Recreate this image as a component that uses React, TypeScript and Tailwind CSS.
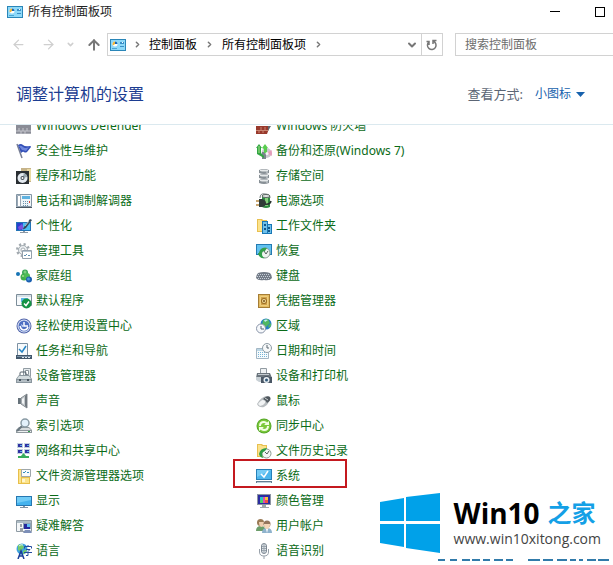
import type { ReactNode } from "react";
import { ArrowLeft, ArrowRight, ArrowUp, ChevronDown, ChevronRight } from "lucide-react";

type Item = { name: string; icon: ReactNode; marked?: boolean };

const panelIcon = (
  <>
    <path d="M0 2h16v12H0z" fill="#2a86b8" />
    <path d="M1 3h14v10H1z" fill="#8ed9f8" />
    <circle cx="5" cy="7" r="2.500" fill="#fff" />
    <path d="M5 7V4.500A2.500 2.500 0 0 1 7.500 7z" fill="#1766b5" />
    <path d="M5 7V4.500A2.500 2.500 0 0 0 3 8.500z" fill="#f0b431" />
    <path d="M10 5h4v2h-4zM10 9h4v1h-4z" fill="#3a8fc8" />
    <path d="M12 5h1v1h-1z" fill="#fff" />
    <path d="M2 11h5v1H2z" fill="#4aa6d6" />
  </>
);

const screenIcon = (
  <>
    <path d="M0 3h16v10H0z" fill="#2677b1" />
    <path d="M1 4h14v8H1z" fill="#45b3ee" />
    <path d="M1 4h14v3L1 10z" fill="#71ccf7" />
    <path d="M7 13h2v1h3v1H4v-1h3z" fill="#8294a4" />
  </>
);

const folder = (
  <>
    <path d="M1 1h5l1 1h4v12H1z" fill="#e8c050" />
    <path d="M2 2h3l1 1h4v10H2z" fill="#fbe28c" />
  </>
);

const leftItems: Item[] = [
  {
    name: "Windows Defender",
    icon: (
      <>
        <path d="M0 7h15v10H0z" fill="#8a8c96" />
        <path d="M0 13h15M0 16h15M3 10v3M7 10v3M11 10v3M5 13v3M9 13v3" stroke="#c5c6cd" fill="none" />
      </>
    ),
  },
  {
    name: "安全性与维护",
    icon: (
      <>
        <path d="M1 1l5 14" stroke="#777e94" strokeWidth="1.500" />
        <path d="M2 2q3-2 5 0t7 1q1 0 1 1l-4 5q-2 1-3 0T5 10z" fill="#3450b7" />
        <path d="M3 3q2-1 4 1t6 0l-3 4q-3-1-4-1z" fill="#6f88de" />
      </>
    ),
  },
  {
    name: "程序和功能",
    icon: (
      <>
        <path d="M5 0h10v14H5z" fill="#c6b389" />
        <path d="M11 1h4v12h-4z" fill="#e9d9a2" />
        <path d="M0 3h13v13H0z" fill="#292e32" />
        <circle cx="6.500" cy="10" r="5" fill="#e4eaf0" />
        <path d="M6.500 10L8 5q3 1 3 4z" fill="#98a6ad" />
        <circle cx="6.500" cy="10" r="2" fill="#454c55" />
        <circle cx="6.500" cy="10" r="1" fill="#fff" />
      </>
    ),
  },
  {
    name: "电话和调制解调器",
    icon: (
      <>
        <path d="M.5 1.500h15v12H.5z" fill="#eef4f8" stroke="#8496a5" />
        <path d="M6 3h8v3H6z" fill="#5fb2e0" />
        <path d="M7 8.500h6M7 10.500h6M7 12.500h6" stroke="#6b93b0" strokeDasharray="1 1" />
        <path d="M1.500 2.500h3v11h-3z" fill="#fff" stroke="#9aa8b6" />
        <path d="M13 8h1v2h-1z" fill="#db4136" />
        <path d="M0 14h16v1H0z" fill="#4b5864" />
      </>
    ),
  },
  {
    name: "个性化",
    icon: (
      <>
        <path d="M0 4h15v9H0z" fill="#2474b6" />
        <path d="M1 5h13v7H1z" fill="#49bdf1" />
        <path d="M1 5h6l-1 7H1z" fill="#293fd0" />
        <path d="M2 9l4-3 2 5-5 1z" fill="#7b50dc" />
        <path d="M7 13h2v1h3v1H4v-1h3z" fill="#8c99a5" />
        <path d="M8 9l6-8 2 1-6 8q-3 2-3 1z" fill="#34485b" />
        <path d="M9 8l4-5" stroke="#b1c4d0" />
      </>
    ),
  },
  {
    name: "管理工具",
    icon: (
      <>
        <circle cx="7" cy="7" r="5.500" fill="none" stroke="#a2a9af" strokeWidth="3" strokeDasharray="2 2.300" />
        <circle cx="7" cy="7" r="4.500" fill="#eceff1" stroke="#a7afb5" />
        <circle cx="7" cy="7" r="2" fill="#fff" stroke="#a7afb5" />
        <path d="M6.500 7.500h9v8h-9z" fill="#fff" stroke="#93a0ab" />
        <path d="M7 8h8v1H7z" fill="#b4c4d1" />
        <path d="M8 12l1 1 2-2M12 12.500h2" fill="none" stroke="#5c8fb0" />
      </>
    ),
  },
  {
    name: "家庭组",
    icon: (
      <>
        <circle cx="2" cy="6" r="2" fill="#1674b5" />
        <circle cx="9" cy="4.500" r="3" fill="#3aa85a" />
        <circle cx="8" cy="9" r="3.500" fill="#3fae4c" />
        <circle cx="11" cy="8" r="3" fill="#4dbb55" />
        <circle cx="13" cy="11.500" r="3" fill="#1a5fb0" />
        <circle cx="12.500" cy="11" r="1.500" fill="#4a97d8" />
        <circle cx="9" cy="4" r="1.500" fill="#7fd080" />
        <circle cx="7" cy="8" r="1" fill="#a5e28f" />
      </>
    ),
  },
  {
    name: "默认程序",
    icon: (
      <>
        <path d="M.5 1.500h15v11H.5z" fill="#f7fafc" stroke="#7c8d99" />
        <path d="M1 2h14v2H1z" fill="#d7e1e8" />
        <path d="M5 5h7v4H5z" fill="#5bb6e8" />
        <circle cx="10.500" cy="10.500" r="5" fill="#149344" />
        <path d="M8 10.500l2 2 3-4" fill="none" stroke="#fff" strokeWidth="1.500" />
      </>
    ),
  },
  {
    name: "轻松使用设置中心",
    icon: (
      <>
        <circle cx="8" cy="8" r="7.500" fill="#5266ab" />
        <circle cx="8" cy="8" r="6.500" fill="#e0e7f7" />
        <circle cx="8" cy="8" r="5.500" fill="#4f6fc2" />
        <path d="M8 4v4h4M4 8q1 4 4 4t4-3" fill="none" stroke="#fff" strokeWidth="1.500" />
        <path d="M5 6l3 2-2 1z" fill="#cbdcf9" />
      </>
    ),
  },
  {
    name: "任务栏和导航",
    icon: (
      <>
        <path d="M1.500.5h10v12h-10z" fill="#f7fafc" stroke="#7c91a3" />
        <path d="M3 6l3 3 4-6" fill="none" stroke="#2585c5" strokeWidth="1.500" />
        <path d="M0 12h16v4H0z" fill="#42576b" />
        <path d="M1 13h14v1H1z" fill="#7b94aa" />
        <path d="M6 14h2v1H6zM9 14h2v1H9zM12 14h2v1h-2z" fill="#dfe8ee" />
      </>
    ),
  },
  {
    name: "设备管理器",
    icon: (
      <>
        <path d="M7.500.5h7v8h-7z" fill="#e5ebee" stroke="#929ca3" />
        <path d="M9.500 2.500h3v4h-3z" fill="#fff" stroke="#8b959b" />
        <path d="M4 7V5q0-1 1-1h4q1 0 1 1v2" fill="none" stroke="#56636d" />
        <path d="M3 7h10l3 4v4H0v-4z" fill="#8a969e" />
        <path d="M3 8h10l2 3H1z" fill="#d4dcdf" />
        <path d="M1 12h14v2H1z" fill="#b4bec4" />
        <path d="M3 11h2v2H3zM11 11h2v2h-2z" fill="#4a5760" />
      </>
    ),
  },
  {
    name: "声音",
    icon: (
      <>
        <path d="M2 5h3v6H2z" fill="#66727a" />
        <path d="M5 5l6-4v14l-6-4z" fill="#c3c9cc" stroke="#858c91" />
        <path d="M9 3l2-2v14l-2-2z" fill="#71787e" />
        <path d="M6 6l2-1v6l-2-1z" fill="#f4f6f7" />
      </>
    ),
  },
  {
    name: "索引选项",
    icon: (
      <>
        <path d="M3 9h10l3 3v3H0v-3z" fill="#8f989d" />
        <path d="M3 10h10l2 2H1z" fill="#d7dcde" />
        <path d="M1 13h14v1H1z" fill="#edf0f1" />
        <path d="M12 13h2v1h-2z" fill="#2f9c48" />
        <path d="M6 8l-5 5" stroke="#697780" strokeWidth="2" />
        <circle cx="9" cy="5" r="4" fill="#dceefa" fillOpacity=".8" stroke="#899aa4" strokeWidth="1.500" />
      </>
    ),
  },
  {
    name: "网络和共享中心",
    icon: (
      <>
        <path d="M1 0h6v5H1zM8 0h6v5H8zM1 6h6v5H1zM8 6h6v5H8z" fill="#c3d3e0" />
        <path d="M2 1h4v3H2zM9 1h4v3H9zM2 7h4v3H2zM9 7h4v3H9z" fill="#2e31a3" />
        <path d="M4 2h2v1H4zM11 2h2v1h-2zM4 8h2v1H4zM11 8h2v1h-2z" fill="#5aaee5" />
        <path d="M2 13h3l2.500-3 2.500 3h3v2H2z" fill="#38ad5d" />
      </>
    ),
  },
  {
    name: "文件资源管理器选项",
    icon: (
      <>
        <path d="M2 1h5l1 1h6v14H2z" fill="#e7bf4b" />
        <path d="M3 2h2v13H3zM6 10h7v5H6z" fill="#fce38b" />
        <path d="M5.500 1.500h9v7h-9z" fill="#f9fbfc" stroke="#9ea6aa" />
        <path d="M7 4l1 1 2-2M11 4.500h2" fill="none" stroke="#368dbc" />
        <path d="M6 11h3v3H6z" fill="#fff6cd" />
      </>
    ),
  },
  { name: "显示", icon: screenIcon },
  {
    name: "疑难解答",
    icon: (
      <>
        <path d="M.5 2.500h15v11H.5z" fill="#f4f7f9" stroke="#8e9aa3" />
        <path d="M1 3h14v2H1z" fill="#adbbc4" />
        <path d="M7 5h8v6H7z" fill="#8ca3b6" />
        <path d="M8 6h6v5H8z" fill="#25279c" />
        <path d="M11 6h3v3h-3z" fill="#5ebbf0" />
        <path d="M4 6h2v3H4zM4 10h3v4H4z" fill="#9aa1a8" />
        <path d="M9 12h5l2 3H7z" fill="#7d8fb8" />
      </>
    ),
  },
  {
    name: "语言",
    icon: (
      <>
        <circle cx="6" cy="6" r="5.500" fill="#3ea2de" />
        <path d="M2 2l4-1 2 3-3 4-3-1zM7 8l4-2-1 4-3 1z" fill="#75c96b" />
        <path d="M3 3q2-2 4-1" fill="none" stroke="#d5f1fb" />
        <path d="M2 16l3-8 3 8M3 13h4" fill="none" stroke="#1b3f99" strokeWidth="1.500" />
        <path d="M8.500 5.500v-2h7v2M12 2v2M10 6.500h4l-2 2v4h-2M8 9.500h8" fill="none" stroke="#234ba1" />
      </>
    ),
  },
];

const rightItems: Item[] = [
  {
    name: "Windows 防火墙",
    icon: (
      <>
        <path d="M0 8h14l-3 8H0z" fill="#98392c" />
        <path d="M0 12.500h12M5 9v3M9 9v3M3 13v2M7 13v2" stroke="#c98572" fill="none" />
        <path d="M12 8h3l-3 5z" fill="#606971" />
      </>
    ),
  },
  {
    name: "备份和还原(Windows 7)",
    icon: (
      <>
        <circle cx="10.500" cy="10" r="5" fill="#c9c6ce" />
        <path d="M10.500 10l5-3q1 4 0 6z" fill="#e49ebb" />
        <path d="M6 9h4v7H6z" fill="#7a868d" />
        <path d="M0 5l3-4 3 4H5v5l3 3v2L1 11V5z" fill="#32a543" />
        <path d="M6 5l3-4 3 4h-1v5H8V6z" fill="#5acd50" />
        <path d="M3 3v7" stroke="#a5e588" />
        <circle cx="11" cy="10.500" r="1.500" fill="#f3f5f7" />
      </>
    ),
  },
  {
    name: "存储空间",
    icon: (
      <>
        <path d="M3 2q5-2 10 0v3q-5 2-10 0zM3 7q5-2 10 0v3q-5 2-10 0zM3 12q5-2 10 0v3q-5 2-10 0z" fill="#889096" />
        <path d="M4 2q4-1 8 0v1q-4 1-8 0zM4 7q4-1 8 0v1q-4 1-8 0zM4 12q4-1 8 0v1q-4 1-8 0z" fill="#e6e9ea" />
        <path d="M10 4h2M10 9h2M10 14h2" stroke="#d5dadd" />
      </>
    ),
  },
  {
    name: "电源选项",
    icon: (
      <>
        <path d="M6 4h8v10q-4 2-8 0z" fill="#2f8a42" />
        <path d="M9 4h3v9H9z" fill="#86cf7c" />
        <path d="M4 5q0-5 5-4 5 0 5 4" fill="none" stroke="#6e7879" />
        <ellipse cx="10" cy="3" rx="4" ry="1.500" fill="#e4e9e7" stroke="#5b6662" />
        <path d="M0 8h4M0 12h4" stroke="#b68b46" strokeWidth="1.500" />
        <path d="M3 6h3q4 1 4 4t-4 4H3z" fill="#303c38" />
        <path d="M9 11q5 1 6-3" fill="none" stroke="#293430" strokeWidth="1.500" />
      </>
    ),
  },
  {
    name: "工作文件夹",
    icon: (
      <>
        {folder}
        <path d="M6 3h6v3h4v10H6z" fill="#1878b6" />
        <path d="M7 4h4v11H7zM12 7h3v8h-3z" fill="#6fc0ea" />
        <path d="M8 6h2v2H8zM8 10h2v2H8zM12 9h2v2h-2zM12 12h2v2h-2z" fill="#105588" />
      </>
    ),
  },
  {
    name: "恢复",
    icon: (
      <>
        <path d="M0 1h16v11H0z" fill="#247bb2" />
        <path d="M1 2h14v9H1z" fill="#61c1f0" />
        <circle cx="9" cy="10" r="5" fill="#eef3ef" stroke="#8b9c95" />
        <path d="M3 10q1-6 8-5L9 8q-3 0-3 3 0 3 3 4-6 1-7-5z" fill="#33a04b" />
        <path d="M8 8l2 3 2-3" fill="none" stroke="#54635d" />
      </>
    ),
  },
  {
    name: "键盘",
    icon: (
      <>
        <path d="M2 5q6-2 12 0 2 2 2 5-2 3-8 2-6 1-8-2 0-3 2-5z" fill="#737b87" />
        <path d="M2 6.500h12M1 8.500h14M2 10.500h12" stroke="#c6ced8" strokeDasharray="1 1" />
      </>
    ),
  },
  {
    name: "凭据管理器",
    icon: (
      <>
        <path d="M2 1h12v14H2z" fill="#a57d35" />
        <path d="M3 2h10v12H3z" fill="#e3bb62" />
        <path d="M4.500 3.500h7v9h-7z" fill="#d0a34c" stroke="#efcf7e" />
        <circle cx="8" cy="8" r="3" fill="#9a6b25" />
        <circle cx="8" cy="8" r="2" fill="#f3dd9b" />
        <circle cx="8" cy="8" r="1" fill="#75501d" />
      </>
    ),
  },
  {
    name: "区域",
    icon: (
      <>
        <circle cx="10" cy="6" r="5.500" fill="#257fc6" />
        <path d="M7 2l5-1 2 4-4 4-4-1zM12 8l3-3v3l-2 2z" fill="#51b862" />
        <path d="M8 2q2-1 4 0l-3 2z" fill="#c1ecf6" />
        <circle cx="5" cy="10.500" r="4.500" fill="#f6f8fb" stroke="#8994a8" />
        <path d="M5 8v3h3" fill="none" stroke="#536276" />
      </>
    ),
  },
  {
    name: "日期和时间",
    icon: (
      <>
        <path d="M.5 5.500h12v10H.5z" fill="#f7fbfd" stroke="#a3b6c4" />
        <path d="M1 6h11v2H1z" fill="#bcd7e5" />
        <path d="M2 9.500h9M2 11.500h9M2 13.500h9" stroke="#77b4d6" strokeDasharray="1 1" />
        <circle cx="11" cy="5" r="4.500" fill="#f6f8f9" stroke="#8f9ca5" />
        <path d="M11 2v3h2" fill="none" stroke="#5a6770" />
      </>
    ),
  },
  {
    name: "设备和打印机",
    icon: (
      <>
        <path d="M4.500.5h6v5h-6z" fill="#eef1f3" stroke="#929ba2" />
        <path d="M1 5h13l2 5H0z" fill="#6a747c" />
        <path d="M2 6h11v1H2z" fill="#c2c9cf" />
        <path d="M0 9h7v5H3l-3-2z" fill="#c8d0d5" />
        <path d="M5 9h3l1-1h3l1 1h3v6H5z" fill="#4a5765" />
        <circle cx="10.500" cy="12" r="3" fill="#e6edf2" />
        <circle cx="10.500" cy="12" r="1.500" fill="#315878" />
      </>
    ),
  },
  {
    name: "鼠标",
    icon: (
      <>
        <path d="M1 11q4-7 9-8 5 0 4 3-1 5-6 8-5 1-7-3z" fill="#b8bdc0" />
        <path d="M7 6q4-4 7-2 2 3-3 6-1-3-4-4z" fill="#50585e" />
        <path d="M2 11q3-4 5-4 3 1 2 3-2 3-5 3z" fill="#f1f3f4" />
        <path d="M9 5l3 2" stroke="#cad0d3" />
      </>
    ),
  },
  {
    name: "同步中心",
    icon: (
      <>
        <circle cx="8" cy="8" r="7.500" fill="#57a82a" />
        <circle cx="8" cy="8" r="6.500" fill="#7cc93b" />
        <path d="M4 8q0-4 4-4 2 0 3 2M12 8q0 4-4 4-2 0-3-2" fill="none" stroke="#f3ffe5" strokeWidth="2" />
        <path d="M8 7h5V3zM8 9H3v4z" fill="#f3ffe5" />
      </>
    ),
  },
  {
    name: "文件历史记录",
    icon: (
      <>
        {folder}
        <circle cx="10.500" cy="10.500" r="4.500" fill="#f3f6f4" stroke="#8c9d95" />
        <path d="M3 11q1-6 8-6L9 8q-3 1-3 3 0 3 2 4-4 0-5-4z" fill="#2e9d46" />
        <path d="M9 9l2 2 2-3" fill="none" stroke="#54635d" />
      </>
    ),
  },
  {
    name: "系统",
    marked: true,
    icon: (
      <>
        <path d="M0 1h16v11H0z" fill="#2681b9" />
        <path d="M1 2h14v9H1z" fill="#4cb5ec" />
        <path d="M1 2h14L1 9z" fill="#75cbf5" />
        <path d="M5 6l3 3 4-6" fill="none" stroke="#fff" strokeWidth="1.500" />
        <path d="M0 13h16v2H0z" fill="#657d91" />
        <path d="M1 14h14v1H1z" fill="#c1d0dc" />
      </>
    ),
  },
  {
    name: "颜色管理",
    icon: (
      <>
        <path d="M1 1h14v11H1z" fill="#8d95a4" />
        <path d="M2 2h12v9H2z" fill="#2b2ca0" />
        <path d="M4 4h3v6H4z" fill="#28c6c8" />
        <path d="M7 4h2v6H7z" fill="#dc4cb5" />
        <path d="M9 4h3v6H9z" fill="#f9c63b" />
        <path d="M4 7h3v3H4z" fill="#47d26a" />
        <path d="M9 7h3v3H9z" fill="#ef533d" />
        <path d="M6 12h4v2h3v1H4v-1h2z" fill="#9ca5ab" />
      </>
    ),
  },
  {
    name: "用户帐户",
    icon: (
      <>
        <path d="M0 13q0-5 5-5t4 5z" fill="#6c9d6a" />
        <circle cx="4.500" cy="4.500" r="3.500" fill="#9a7a55" />
        <path d="M3 4h5q0 5-3 5-2-1-2-5z" fill="#efceb0" />
        <path d="M6 15q0-5 5-5t5 5z" fill="#8fb3cd" />
        <circle cx="11" cy="6" r="3.500" fill="#94755d" />
        <path d="M8 6h6q0 5-3 5t-3-5z" fill="#f4d5b8" />
        <path d="M10 11h2l-1 4z" fill="#fff" />
      </>
    ),
  },
  {
    name: "语音识别",
    icon: (
      <>
        <rect x="5.500" y=".5" width="5" height="10" rx="2.500" fill="#e1e6ea" stroke="#7d8893" />
        <path d="M6 3.500h4M6 5.500h4M6 7.500h4M8 1v9" stroke="#9ba5ae" />
        <path d="M3.500 6v3q0 4 4.500 4t4.500-4V6M8 13v3" fill="none" stroke="#98a1aa" />
      </>
    ),
  },
];

function Icon({ children }: { children: ReactNode }) {
  return (
    <svg viewBox="0 0 16 16" className="size-4 shrink-0" aria-hidden="true">
      {children}
    </svg>
  );
}

function ItemColumn({ items }: { items: Item[] }) {
  return (
    <ul className="w-60 shrink-0">
      {items.map((item) => (
        <li key={item.name} className="relative flex h-[25px] items-center">
          <a href="#" className="flex items-center gap-1 whitespace-nowrap text-[#0b6b18] hover:underline">
            <Icon>{item.icon}</Icon>
            {item.name}
          </a>
          {item.marked && (
            <span className="pointer-events-none absolute -top-1 -left-[23px] h-[29px] w-[114px] border-2 border-[#c4191f]" />
          )}
        </li>
      ))}
    </ul>
  );
}

function TitleBar() {
  return (
    <header className="flex h-[23px] items-center justify-between pr-2 pl-[7px]">
      <div className="flex items-center gap-[5px] text-[#222]">
        <Icon>{panelIcon}</Icon>
        <h1>所有控制面板项</h1>
      </div>
      <div className="flex items-center gap-[35px]">
        <button aria-label="最小化" className="flex size-[10px] items-center">
          <span className="h-px w-full bg-black" />
        </button>
        <button aria-label="最大化" className="size-[10px] border border-black" />
      </div>
    </header>
  );
}

function AddressRow() {
  return (
    <div className="mt-[10px] flex h-[23px] pl-[11px]">
      <div className="flex w-24 items-center text-[#cfcfcf]">
        <button aria-label="后退" className="w-[30px]">
          <ArrowLeft size={15} strokeWidth={2} />
        </button>
        <button aria-label="前进" className="w-[25px]">
          <ArrowRight size={15} strokeWidth={2} />
        </button>
        <button aria-label="最近浏览的位置" className="w-[20px]">
          <ChevronDown size={9} strokeWidth={4} />
        </button>
        <button aria-label="向上" className="text-[#777]">
          <ArrowUp size={16} strokeWidth={3} />
        </button>
      </div>
      <div className="flex min-w-0 flex-1 border border-[#d2d2d2]">
        <nav className="flex flex-1 items-center pl-[2px] whitespace-nowrap text-black">
          <Icon>{panelIcon}</Icon>
          <ChevronRight size={9} strokeWidth={4} className="mx-[7px] text-[#777]" />
          <a href="#">控制面板</a>
          <ChevronRight size={9} strokeWidth={4} className="mx-2 text-[#777]" />
          <a href="#">所有控制面板项</a>
          <ChevronRight size={9} strokeWidth={4} className="ml-2 text-[#777]" />
        </nav>
        <button aria-label="以前的位置" className="px-[3px] text-[#777]">
          <ChevronDown size={12} strokeWidth={4} />
        </button>
        <button aria-label="刷新" className="border-l border-[#d2d2d2] px-1 text-[#777]">
          <svg viewBox="0 0 12 12" className="size-3" fill="none" stroke="currentColor" strokeWidth="1.500">
            <path d="M7.500 2.300a4.300 4.300 0 1 1-4.500.6M3 6V2.500H.5M7 5V1.500h3.500" />
          </svg>
        </button>
      </div>
      <input
        type="search"
        aria-label="搜索控制面板"
        placeholder="搜索控制面板"
        className="ml-3 w-[158px] border border-r-0 border-[#d2d2d2] pl-[9px] outline-none placeholder:text-[#6d6d6d]"
      />
    </div>
  );
}

function Watermark() {
  return (
    <aside className="absolute right-0 bottom-0 bg-white pt-3 pl-2">
      <div className="flex gap-[14px] pr-3">
        <svg viewBox="0 0 60 60" className="size-[60px]" fill="#00a1e9" aria-hidden="true">
          <path d="M0 9l24-4v23H0zM26 4l34-4v28H26zM0 31h24v23L0 50zM26 31h34v29l-34-5z" />
        </svg>
        <div className="flex flex-col pt-1 font-['Open_Sans','Noto_Sans_CJK_SC',sans-serif]">
          <div className="flex items-center gap-2 leading-7 font-bold">
            <span className="text-[28px] text-black">Win10</span>
            <span className="text-2xl text-[#14a0e6]">之家</span>
          </div>
          <span className="text-sm leading-5 text-[#444]">www.win10xitong.com</span>
        </div>
      </div>
      <svg viewBox="0 0 176 12" className="ml-auto h-3 w-44" aria-hidden="true">
        <path
          d="M1 7h7m5 0h7m5 0h8m2 0h8m3 0h7m4 0h9m3 0h7m15 0h12m3 0h10m4 0h10m3 0h6m3 0h4m4 0h9m2 0h11"
          stroke="#317baa"
          strokeWidth="2"
        />
      </svg>
    </aside>
  );
}

export default function App() {
  return (
    <div className="relative min-h-screen overflow-hidden bg-white font-['Noto_Sans','Noto_Sans_CJK_SC',sans-serif] text-xs">
      <TitleBar />
      <AddressRow />
      <section className="flex h-[69px] items-end justify-between border-b border-[#dbe9ef] pr-7 pb-[18px] pl-4">
        <h2 className="text-base leading-6 text-[#1c3d91]">调整计算机的设置</h2>
        <div className="flex items-center leading-6">
          <label htmlFor="view" className="mr-3 text-[13px] text-[#5c6675]">
            查看方式:
          </label>
          <select id="view" className="appearance-none bg-transparent text-[#1762ad] outline-none">
            <option>小图标</option>
          </select>
          <svg viewBox="0 0 9 5" className="ml-1 h-[5px] w-[9px]" fill="#1762ad" aria-hidden="true">
            <path d="M0 0h9L4.500 5z" />
          </svg>
        </div>
      </section>
      <main className="overflow-hidden pl-4">
        <div className="-mt-3 flex">
          <ItemColumn items={leftItems} />
          <ItemColumn items={rightItems} />
        </div>
      </main>
      <Watermark />
    </div>
  );
}
